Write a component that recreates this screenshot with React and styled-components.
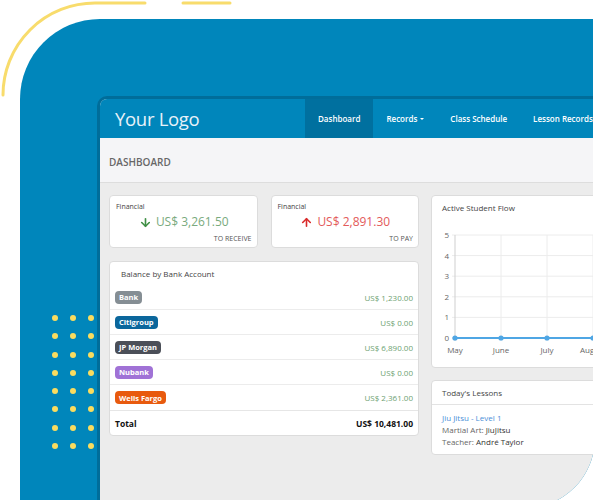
import React from "react";
import styled, { createGlobalStyle } from "styled-components";
import { ArrowDown, ArrowUp } from "lucide-react";

const GlobalStyle = createGlobalStyle`
  html, body {
    margin: 0;
    padding: 0;
    background: #ffffff;
    overflow: hidden;
  }
  * {
    box-sizing: border-box;
  }
`;

const banks = [
  { name: "Bank", color: "#858e94", amount: "US$ 1,230.00" },
  { name: "Citigroup", color: "#0b679c", amount: "US$ 0.00" },
  { name: "JP Morgan", color: "#4b4f58", amount: "US$ 6,890.00" },
  { name: "Nubank", color: "#a072d6", amount: "US$ 0.00" },
  { name: "Wells Fargo", color: "#e85a0e", amount: "US$ 2,361.00" },
];

const months = ["May", "June", "July", "August"];

function FlowChart() {
  const top = 17;
  const step = 20.6;
  const axisX = 23;
  const colStep = 46;
  return (
    <ChartSvg width="198" height="146" viewBox="0 0 198 146">
      {[5, 4, 3, 2, 1, 0].map((v, i) => (
        <g key={v}>
          <line
            x1={axisX - 3}
            x2="198"
            y1={top + i * step}
            y2={top + i * step}
            stroke={v === 0 ? "#cfcfcf" : "#ececec"}
          />
          <text
            x={axisX - 6}
            y={top + i * step + 3}
            textAnchor="end"
            fontSize="8"
            fill="#666"
          >
            {v}
          </text>
        </g>
      ))}
      {[0, 1, 2, 3, 4].map((i) => (
        <line
          key={i}
          x1={axisX + i * colStep}
          x2={axisX + i * colStep}
          y1={top}
          y2={top + 5 * step + 3}
          stroke={i === 0 ? "#cfcfcf" : "#ececec"}
        />
      ))}
      {months.map((m, i) => (
        <text
          key={m}
          x={axisX + i * colStep}
          y="135"
          textAnchor="middle"
          fontSize="8"
          fill="#666"
        >
          {m}
        </text>
      ))}
      <line
        x1={axisX}
        x2="198"
        y1={top + 5 * step}
        y2={top + 5 * step}
        stroke="#4fa6e4"
        strokeWidth="2"
      />
      {months.map((m, i) => (
        <circle
          key={m}
          cx={axisX + i * colStep}
          cy={top + 5 * step}
          r="2.6"
          fill="#4fa6e4"
        />
      ))}
    </ChartSvg>
  );
}

export default function App() {
  return (
    <Stage>
      <GlobalStyle />
      <ArcDecor width="240" height="100" viewBox="0 0 240 100">
        <path
          d="M 3 95 A 92 92 0 0 1 95 3 L 145 3 M 183 3 L 230 3"
          fill="none"
          stroke="#f8dc6c"
          strokeWidth="3"
          strokeLinecap="round"
        />
      </ArcDecor>
      <BluePanel>
        <AppWindow>
          <TopBar>
            <Brand>Your Logo</Brand>
            <Nav>
              <NavItem active>Dashboard</NavItem>
              <NavItem>
                Records <Caret />
              </NavItem>
              <NavItem>Class Schedule</NavItem>
              <NavItem>Lesson Records</NavItem>
            </Nav>
          </TopBar>
          <PageHeader>DASHBOARD</PageHeader>
          <Content>
            <LeftCol>
              <FinRow>
                <FinCard>
                  <SmallLabel>Financial</SmallLabel>
                  <FinValue tone="in">
                    <ArrowDown size={13} strokeWidth={3} />
                    <span>US$ 3,261.50</span>
                  </FinValue>
                  <FinFoot>TO RECEIVE</FinFoot>
                </FinCard>
                <FinCard>
                  <SmallLabel>Financial</SmallLabel>
                  <FinValue tone="out">
                    <ArrowUp size={13} strokeWidth={3} />
                    <span>US$ 2,891.30</span>
                  </FinValue>
                  <FinFoot>TO PAY</FinFoot>
                </FinCard>
              </FinRow>
              <Card>
                <BalanceTitle>Balance by Bank Account</BalanceTitle>
                {banks.map((b) => (
                  <BankRow key={b.name}>
                    <Badge color={b.color}>{b.name}</Badge>
                    <Amount>{b.amount}</Amount>
                  </BankRow>
                ))}
                <BankRow total>
                  <span>Total</span>
                  <span>US$ 10,481.00</span>
                </BankRow>
              </Card>
            </LeftCol>
            <RightCol>
              <ChartCard>
                <CardTitle>Active Student Flow</CardTitle>
                <FlowChart />
              </ChartCard>
              <Card>
                <LessonsTitle>Today's Lessons</LessonsTitle>
                <LessonBody>
                  <LessonLink>Jiu Jitsu - Level 1</LessonLink>
                  <LessonLine>
                    Martial Art: <strong>JiuJitsu</strong>
                  </LessonLine>
                  <LessonLine>
                    Teacher: <strong>André Taylor</strong>
                  </LessonLine>
                </LessonBody>
              </Card>
            </RightCol>
          </Content>
        </AppWindow>
      </BluePanel>
      <Dots>
        {Array.from({ length: 24 }).map((_, i) => (
          <Dot key={i} />
        ))}
      </Dots>
    </Stage>
  );
}

const Stage = styled.div`
  position: relative;
  width: 593px;
  height: 500px;
  overflow: hidden;
  padding: 19px 0 0 20px;
  font-family: "Open Sans", "Noto Sans", sans-serif;
  color: #444;
`;
const ArcDecor = styled.svg`
  position: absolute;
  top: 0;
  left: 0;
  width: 240px;
  height: 100px;
`;
const Dots = styled.div`
  position: absolute;
  left: 52px;
  top: 315px;
  display: grid;
  grid-template-columns: repeat(3, 6px);
  column-gap: 12px;
  row-gap: 12.3px;
`;
const Dot = styled.span`
  width: 6px;
  height: 6px;
  border-radius: 50%;
  background: #f9dc5f;
`;
const BluePanel = styled.div`
  width: 575px;
  height: 489px;
  background: #0086bb;
  border-radius: 80px 0 70px 0;
  overflow: hidden;
  padding: 77px 0 0 77px;
`;
const AppWindow = styled.div`
  width: 560px;
  height: 100%;
  border-top: 3px solid #006d9a;
  border-left: 3px solid #006d9a;
  border-top-left-radius: 10px;
  background: #ececec;
  overflow: hidden;
  display: flex;
  flex-direction: column;
`;
const TopBar = styled.div`
  display: flex;
  height: 39px;
  background: #0086bb;
  flex-shrink: 0;
`;
const Brand = styled.div`
  width: 205px;
  padding-left: 15px;
  display: flex;
  align-items: center;
  font-size: 18.5px;
  color: #e8f2f9;
  letter-spacing: -0.3px;
`;
const Nav = styled.div`
  display: flex;
`;
const NavItem = styled.div`
  display: flex;
  align-items: center;
  padding: 0 13px;
  font-size: 8px;
  font-weight: 600;
  color: #ffffff;
  white-space: nowrap;
  background: ${({ active }) => (active ? "#00709f" : "transparent")};
`;
const Caret = styled.span`
  display: inline-block;
  margin-left: 3px;
  border-left: 2.5px solid transparent;
  border-right: 2.5px solid transparent;
  border-top: 2.5px solid #ffffff;
`;
const PageHeader = styled.div`
  height: 45px;
  flex-shrink: 0;
  background: #f5f5f7;
  border-bottom: 1px solid #dddddd;
  padding: 3px 0 0 9px;
  display: flex;
  align-items: center;
  font-size: 10px;
  font-weight: 600;
  color: #676767;
`;
const Content = styled.div`
  display: grid;
  grid-template-columns: 310px 200px;
  column-gap: 12px;
  align-items: start;
  padding: 12px 0 0 9px;
`;
const LeftCol = styled.div`
  display: flex;
  flex-direction: column;
  gap: 13px;
`;
const RightCol = styled.div`
  display: flex;
  flex-direction: column;
  gap: 12px;
`;
const FinRow = styled.div`
  display: grid;
  grid-template-columns: 1fr 1fr;
  column-gap: 13px;
`;
const Card = styled.div`
  background: #ffffff;
  border: 1px solid #dcdcdc;
  border-radius: 4px;
`;
const FinCard = styled(Card)`
  height: 53px;
  padding: 6px 5px 0 6px;
  display: flex;
  flex-direction: column;
`;
const SmallLabel = styled.div`
  font-size: 7px;
  line-height: 10px;
  color: #444;
`;
const FinValue = styled.div`
  display: flex;
  align-items: center;
  justify-content: center;
  gap: 4px;
  margin-top: 2px;
  font-size: 12px;
  line-height: 16px;
  color: ${({ tone }) => (tone === "in" ? "#79aa7d" : "#e35a5a")};
  svg {
    color: ${({ tone }) => (tone === "in" ? "#3f8f45" : "#d92b2b")};
  }
`;
const FinFoot = styled.div`
  margin-top: 4px;
  text-align: right;
  font-size: 7px;
  line-height: 10px;
  color: #555;
`;
const BalanceTitle = styled.div`
  height: 23px;
  padding: 6px 0 0 11px;
  font-size: 8px;
  line-height: 12px;
  color: #444;
`;
const BankRow = styled.div`
  height: 25px;
  display: flex;
  align-items: center;
  justify-content: space-between;
  padding: 0 5px;
  border-top: ${({ total }) => (total ? "1px solid #e6e6e6" : "none")};
  border-bottom: ${({ total }) => (total ? "none" : "1px solid #ececec")};
  font-size: ${({ total }) => (total ? "8.5px" : "8px")};
  font-weight: ${({ total }) => (total ? 700 : 400)};
  color: #111;
  &:nth-of-type(6) {
    border-bottom: none;
  }
`;
const Badge = styled.span`
  display: inline-flex;
  align-items: center;
  height: 13px;
  padding: 0 4px;
  border-radius: 4px;
  background: ${({ color }) => color};
  color: #ffffff;
  font-size: 7.5px;
  font-weight: 700;
`;
const Amount = styled.span`
  color: #6e9f72;
`;
const ChartCard = styled(Card)`
  height: 173px;
  overflow: hidden;
`;
const CardTitle = styled.div`
  height: 22px;
  padding: 6px 0 0 10px;
  font-size: 8px;
  line-height: 12px;
  color: #444;
`;
const ChartSvg = styled.svg`
  display: block;
  font-family: "Open Sans", "Noto Sans", sans-serif;
`;
const LessonsTitle = styled.div`
  height: 24px;
  padding: 6px 0 0 10px;
  font-size: 8px;
  line-height: 12px;
  color: #444;
  border-bottom: 1px solid #e3e3e3;
`;
const LessonBody = styled.div`
  padding: 7px 10px 6px;
  font-size: 8px;
  line-height: 12px;
  color: #666;
  strong {
    font-weight: 400;
    color: #333;
  }
`;
const LessonLink = styled.div`
  color: #4a8fd8;
`;
const LessonLine = styled.div``;
